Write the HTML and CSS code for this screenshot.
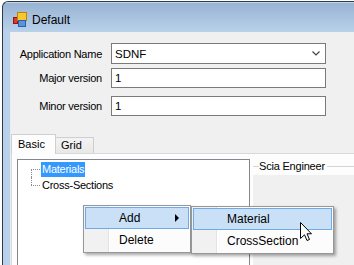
FILE: index.html
```html
<!DOCTYPE html>
<html lang="en">
<head>
    <meta charset="UTF-8">
    <title>Default</title>
    <link rel="stylesheet" href="styles.css">
</head>
<body>
<div class="screen">
    <div class="window">
        <div class="titlebar">
            <svg class="app-icon" width="14" height="15" viewBox="0 0 14 15">
                <rect x="0.5" y="5.5" width="4" height="6" fill="#e03a2a" stroke="#8a1a10"/>
                <rect x="4.5" y="0.5" width="9" height="8" fill="#f7c72c" stroke="#b8860b"/>
                <rect x="5.5" y="8.5" width="7" height="6" fill="#5b93de" stroke="#2d5fa8"/>
            </svg>
            <span class="title">Default</span>
        </div>
        <div class="client">
            <div class="form">
                <div class="row">
                    <label>Application Name</label>
                    <div class="field combo">
                        <span>SDNF</span>
                        <svg class="chevron" width="8" height="5" viewBox="0 0 8 5">
                            <path d="M0.5 0.5 L4 4 L7.5 0.5" fill="none" stroke="#444" stroke-width="1.2"/>
                        </svg>
                    </div>
                </div>
                <div class="row row-2">
                    <label>Major version</label>
                    <div class="field text">1</div>
                </div>
                <div class="row row-3">
                    <label>Minor version</label>
                    <div class="field text">1</div>
                </div>
            </div>

            <div class="tabs">
                <div class="tabstrip">
                    <div class="tab active">Basic</div>
                    <div class="tab">Grid</div>
                </div>
                <div class="tabpage">
                    <div class="tree">
                        <div class="node first"><span class="selected">Materials</span></div>
                        <div class="node last"><span>Cross-Sections</span></div>
                    </div>
                    <div class="group">
                        <div class="group-title"><span>Scia Engineer</span></div>
                        <div class="group-body"></div>
                    </div>
                </div>
            </div>
        </div>
    </div>

    <!-- context menu -->
    <div class="menu ctx">
        <div class="menu-item hot">Add<i class="arrow"></i></div>
        <div class="menu-item">Delete</div>
    </div>
    <div class="menu sub">
        <div class="menu-item hot">Material</div>
        <div class="menu-item">CrossSection</div>
    </div>

    <svg class="cursor" width="13" height="20" viewBox="0 0 13 20">
        <path d="M0.5 0.5 V16.5 L4.5 12.8 L7 18.5 L9.5 17.5 L7 11.8 H11.5 Z" fill="#fff" stroke="#000" stroke-width="1" stroke-linejoin="miter"/>
    </svg>
</div>
</body>
</html>
```

FILE: styles.css
```css
* {
    margin: 0;
    padding: 0;
    box-sizing: border-box;
}

body {
    width: 354px;
    height: 265px;
    overflow: hidden;
    background: #fff;
    font-family: "Liberation Sans", Arial, sans-serif;
    color: #000;
}

.screen {
    position: relative;
    height: 265px;
    padding: 1px 0 0 2px;
}

/* window frame */
.window {
    height: 100%;
    display: flex;
    flex-direction: column;
    border-left: 1px solid #2e3a48;
    border-top: 1px solid #2e3a48;
    border-top-left-radius: 6px;
    background: linear-gradient(#97b3d3, #b9d1ea 30px);
    overflow: hidden;
}

.titlebar {
    height: 30px;
    flex: none;
    display: flex;
    align-items: flex-start;
    padding: 10px 0 0 10px;
    gap: 5px;
    box-shadow: inset 0 1px 0 rgba(255, 255, 255, 0.45);
}

.title {
    font-size: 12px;
    line-height: 15px;
    margin-top: 1px;
}

.client {
    flex: 1;
    margin-left: 7px;
    background: #f0f0f0;
    border-left: 1px solid #e4ecf4;
}

/* form rows */
.form {
    padding-top: 11px;
    margin-left: -1px;
}

.row {
    display: flex;
    align-items: center;
}

.row-2 { margin-top: 4px; }
.row-3 { margin-top: 8px; }

.row label {
    width: 92px;
    margin-right: 9px;
    text-align: right;
    font-size: 11px;
    letter-spacing: -0.25px;
    white-space: nowrap;
}

.field {
    width: 215px;
    display: flex;
    align-items: center;
    padding: 0 4px 0 3px;
    border: 1px solid #7a7a7a;
    background: #fff;
    font-size: 11.5px;
}

.combo {
    height: 21px;
    justify-content: space-between;
}

.text {
    height: 20px;
}

.chevron {
    margin-right: 1px;
}

/* tabs */
.tabs {
    margin-top: 18px;
}

.tabstrip {
    display: flex;
    align-items: flex-end;
    height: 19px;
}

.tab {
    height: 16px;
    width: 39px;
    margin-left: -1px;
    padding: 1px 0 0 5px;
    font-size: 11px;
    border: 1px solid #cfcfcf;
    border-bottom: none;
    background: linear-gradient(#f3f3f3, #e8e8e8);
}

.tab.active {
    position: relative;
    z-index: 1;
    height: 20px;
    width: 45px;
    margin-left: 0;
    margin-bottom: -1px;
    padding: 3px 0 0 6px;
    background: #fdfdfd;
}

.tabpage {
    display: flex;
    gap: 3px;
    padding: 5px 0 0 5px;
    border-top: 1px solid #d9d9d9;
    border-left: 1px solid #d9d9d9;
    background: #fdfdfd;
    height: 120px;
}

.tree {
    width: 233px;
    height: 115px;
    flex: none;
    padding-top: 1px;
    border: 1px solid #828790;
    background: #fff;
    font-size: 11px;
    letter-spacing: -0.25px;
}

.node {
    position: relative;
    height: 16px;
    padding-left: 23px;
    display: flex;
    align-items: center;
}

.node span {
    padding: 1px 1px;
    line-height: 13px;
}

.node .selected {
    background: #3399ff;
    color: #fff;
}

.node::before {
    content: "";
    position: absolute;
    left: 13px;
    top: 8px;
    width: 9px;
    border-top: 1px dotted #8c8c8c;
}

.node.first::after {
    content: "";
    position: absolute;
    left: 13px;
    top: 8px;
    height: 8px;
    border-left: 1px dotted #8c8c8c;
}

.node.last::after {
    content: "";
    position: absolute;
    left: 13px;
    top: 0;
    height: 8px;
    border-left: 1px dotted #8c8c8c;
}

/* group box */
.group {
    flex: 1;
    display: flex;
    flex-direction: column;
}

.group-title {
    height: 14px;
    display: flex;
    align-items: center;
    font-size: 11px;
    letter-spacing: -0.2px;
}

.group-title::before {
    content: "";
    width: 6px;
    border-top: 1px solid #d5d5d5;
}

.group-title::after {
    content: "";
    flex: 1;
    margin-left: 2px;
    border-top: 1px solid #d5d5d5;
}

.group-body {
    flex: 1;
    margin-top: 2px;
    background: #f0f0f0;
}

/* context menus */
.menu {
    position: absolute;
    padding: 1px;
    border: 1px solid #979797;
    background: linear-gradient(to right, #f1f1f1 24px, #e2e3e3 24px 25px, #fff 25px 26px, #fcfcfc 26px);
    box-shadow: 2px 2px 3px rgba(0, 0, 0, 0.35);
    font-size: 12px;
}

.ctx {
    left: 83px;
    top: 205px;
    width: 108px;
}

.sub {
    left: 191px;
    top: 206px;
    width: 143px;
}

.menu-item {
    height: 22px;
    display: flex;
    align-items: center;
    padding-left: 33px;
    border: 1px solid transparent;
}

.menu-item.hot {
    background: #c9e0f7;
    border-color: #6fa9e6;
}

.arrow {
    margin-left: auto;
    margin-right: 9px;
    border-left: 4px solid #000;
    border-top: 4px solid transparent;
    border-bottom: 4px solid transparent;
}

.cursor {
    position: absolute;
    left: 300px;
    top: 222px;
}
```
